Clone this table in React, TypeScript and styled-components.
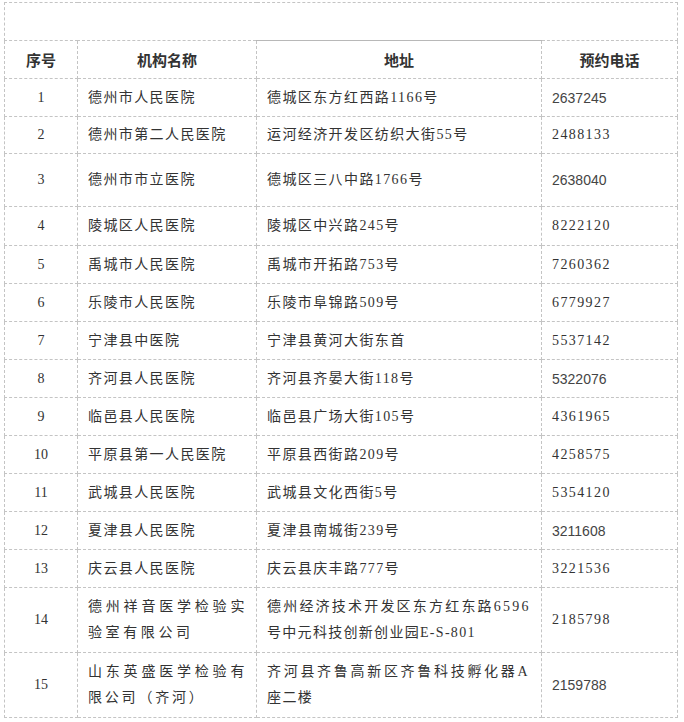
import React from 'react';
import styled, { createGlobalStyle } from 'styled-components';

interface TextLine {
    text: string;
    spacing?: number;
}

interface Clinic {
    name: TextLine[];
    address: TextLine[];
    phone: string;
    height: number;
    sansPhone?: boolean;
}

const one = (text: string): TextLine[] => [{ text }];

const clinics: Clinic[] = [
    { name: one('德州市人民医院'), address: one('德城区东方红西路1166号'), phone: '2637245', height: 38, sansPhone: true },
    { name: one('德州市第二人民医院'), address: one('运河经济开发区纺织大街55号'), phone: '2488133', height: 37 },
    { name: one('德州市市立医院'), address: one('德城区三八中路1766号'), phone: '2638040', height: 53, sansPhone: true },
    { name: one('陵城区人民医院'), address: one('陵城区中兴路245号'), phone: '8222120', height: 39 },
    { name: one('禹城市人民医院'), address: one('禹城市开拓路753号'), phone: '7260362', height: 38 },
    { name: one('乐陵市人民医院'), address: one('乐陵市阜锦路509号'), phone: '6779927', height: 38 },
    { name: one('宁津县中医院'), address: one('宁津县黄河大街东首'), phone: '5537142', height: 38 },
    { name: one('齐河县人民医院'), address: one('齐河县齐晏大街118号'), phone: '5322076', height: 38, sansPhone: true },
    { name: one('临邑县人民医院'), address: one('临邑县广场大街105号'), phone: '4361965', height: 38 },
    { name: one('平原县第一人民医院'), address: one('平原县西街路209号'), phone: '4258575', height: 38 },
    { name: one('武城县人民医院'), address: one('武城县文化西街5号'), phone: '5354120', height: 38 },
    { name: one('夏津县人民医院'), address: one('夏津县南城街239号'), phone: '3211608', height: 38, sansPhone: true },
    { name: one('庆云县人民医院'), address: one('庆云县庆丰路777号'), phone: '3221536', height: 38 },
    {
        name: [
            { text: '德州祥音医学检验实', spacing: 3.8 },
            { text: '验室有限公司', spacing: 3.6 },
        ],
        address: [
            { text: '德州经济技术开发区东方红东路6596', spacing: 2.2 },
            { text: '号中元科技创新创业园E-S-801', spacing: 1.3 },
        ],
        phone: '2185798',
        height: 65,
    },
    {
        name: [
            { text: '山东英盛医学检验有', spacing: 3.8 },
            { text: '限公司（齐河）', spacing: 2.8 },
        ],
        address: [
            { text: '齐河县齐鲁高新区齐鲁科技孵化器A', spacing: 2.7 },
            { text: '座二楼', spacing: 1.4 },
        ],
        phone: '2159788',
        height: 65,
        sansPhone: true,
    },
];

const App: React.FC = () => {
    return (
        <>
            <GlobalStyle />
            <Page>
                <Table>
                    <colgroup>
                        <col style={{ width: 73 }} />
                        <col style={{ width: 179 }} />
                        <col style={{ width: 285 }} />
                        <col style={{ width: 136 }} />
                    </colgroup>
                    <tbody>
                        <tr>
                            <Cell colSpan={4} height={38} />
                        </tr>
                        <tr>
                            <HeadCell height={38}>序号</HeadCell>
                            <HeadCell height={38}>机构名称</HeadCell>
                            <HeadCell height={38} solidTop>地址</HeadCell>
                            <HeadCell height={38}>预约电话</HeadCell>
                        </tr>
                        {clinics.map((c, i) => (
                            <tr key={i}>
                                <IndexCell height={c.height}>{i + 1}</IndexCell>
                                <Cell height={c.height}>
                                    {c.name.map((line, j) => (
                                        <Line key={j} spacing={line.spacing}>
                                            {line.text}
                                        </Line>
                                    ))}
                                </Cell>
                                <Cell height={c.height}>
                                    {c.address.map((line, j) => (
                                        <Line key={j} spacing={line.spacing}>
                                            {line.text}
                                        </Line>
                                    ))}
                                </Cell>
                                <Cell height={c.height} sans={c.sansPhone}>
                                    {c.phone}
                                </Cell>
                            </tr>
                        ))}
                    </tbody>
                </Table>
            </Page>
        </>
    );
};

const GlobalStyle = createGlobalStyle`
    html, body {
        margin: 0;
        padding: 0;
        background: #ffffff;
    }
    body {
        font-family: "Liberation Serif", "Noto Sans CJK SC", serif;
        color: #333333;
    }
`;

const Page = styled.div`
    width: 684px;
    padding: 2px 0 0 4px;
    box-sizing: border-box;
`;

const Table = styled.table`
    border-collapse: collapse;
    table-layout: fixed;
    width: 673px;
    border: 1px dashed #c4c4c4;
`;

const Cell = styled.td<{ height: number; sans?: boolean }>`
    border: 1px dashed #c4c4c4;
    height: ${props => props.height}px;
    padding: 0 2px 0 10px;
    box-sizing: border-box;
    vertical-align: middle;
    font-family: ${props =>
        props.sans
            ? '"Liberation Sans", "Noto Sans CJK SC", sans-serif'
            : '"Liberation Serif", "Noto Sans CJK SC", serif'};
    font-size: 14px;
    letter-spacing: ${props => (props.sans ? '0' : '1.4px')};
    line-height: 26px;
    color: ${props => (props.sans ? '#444444' : '#333333')};
    white-space: nowrap;
    overflow: hidden;
`;

const IndexCell = styled(Cell)`
    text-align: center;
    padding: 0;
    letter-spacing: 0;
`;

const HeadCell = styled.td<{ height: number; solidTop?: boolean }>`
    border: 1px dashed #c4c4c4;
    ${props => (props.solidTop ? 'border-top: 1px solid #b8b8b8;' : '')}
    height: ${props => props.height}px;
    box-sizing: border-box;
    padding: 0;
    text-align: center;
    vertical-align: middle;
    font-family: "Noto Sans CJK SC", sans-serif;
    font-weight: bold;
    font-size: 15px;
    color: #333333;
`;

const Line = styled.div<{ spacing?: number }>`
    line-height: 26px;
    letter-spacing: ${props => (props.spacing !== undefined ? `${props.spacing}px` : 'inherit')};
`;

export default App;
